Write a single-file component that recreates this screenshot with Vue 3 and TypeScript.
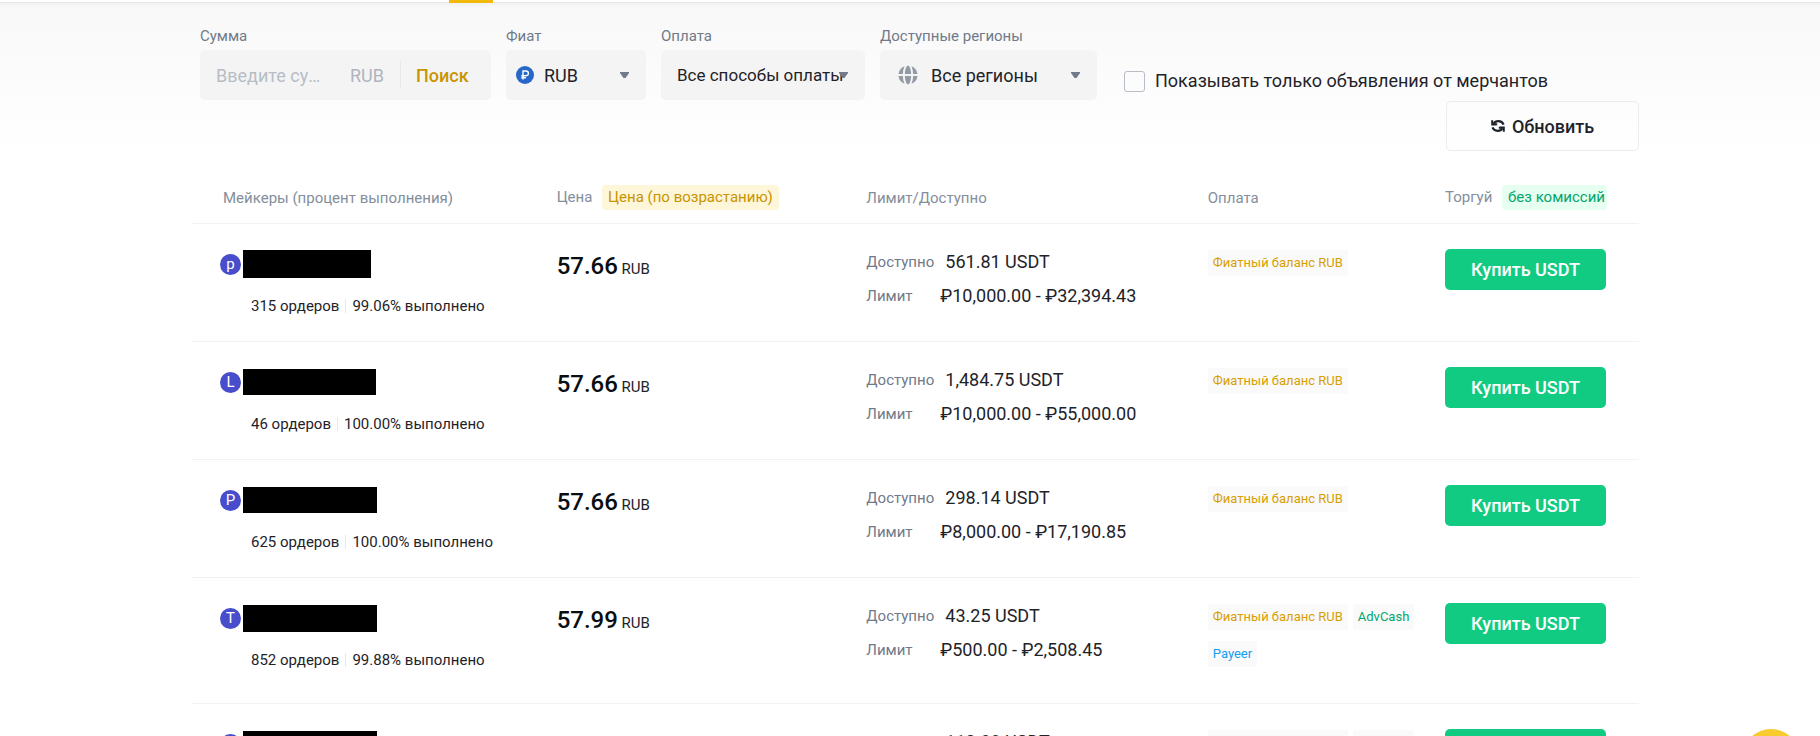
<script setup lang="ts">
import { ref } from 'vue'

interface Method {
  name: string
  tone: 'gold' | 'green' | 'blue'
}

interface Offer {
  initial: string
  maskWidth: number
  maskHeight: number
  orders: string
  completion: string
  price: string
  available: string
  limit: string
  methods: Method[]
}

const fiatBalance: Method = { name: 'Фиатный баланс RUB', tone: 'gold' }
const advCash: Method = { name: 'AdvCash', tone: 'green' }
const payeer: Method = { name: 'Payeer', tone: 'blue' }

const offers: Offer[] = [
  { initial: 'p', maskWidth: 128, maskHeight: 28, orders: '315', completion: '99.06%', price: '57.66', available: '561.81', limit: '₽10,000.00 - ₽32,394.43', methods: [fiatBalance] },
  { initial: 'L', maskWidth: 133, maskHeight: 26, orders: '46', completion: '100.00%', price: '57.66', available: '1,484.75', limit: '₽10,000.00 - ₽55,000.00', methods: [fiatBalance] },
  { initial: 'P', maskWidth: 134, maskHeight: 26, orders: '625', completion: '100.00%', price: '57.66', available: '298.14', limit: '₽8,000.00 - ₽17,190.85', methods: [fiatBalance] },
  { initial: 'T', maskWidth: 134, maskHeight: 27, orders: '852', completion: '99.88%', price: '57.99', available: '43.25', limit: '₽500.00 - ₽2,508.45', methods: [fiatBalance, advCash, payeer] },
  { initial: 'C', maskWidth: 134, maskHeight: 27, orders: '120', completion: '99.00%', price: '58.00', available: '110.88', limit: '₽1,000.00 - ₽6,000.00', methods: [fiatBalance, advCash] },
]

const amount = ref('')
const merchantsOnly = ref(false)
</script>

<template>
  <div class="page">
    <div class="tabs"><span class="tab-active"></span></div>

    <main class="content">
      <form class="filters" @submit.prevent>
        <div class="field field-amount">
          <label for="amount">Сумма</label>
          <div class="box">
            <input id="amount" v-model="amount" type="text" placeholder="Введите сумму" />
            <span class="unit">RUB</span>
            <button class="search" type="submit">Поиск</button>
          </div>
        </div>

        <div class="field field-fiat">
          <label for="fiat">Фиат</label>
          <div class="box">
            <svg class="lead coin" viewBox="0 0 18 18" aria-hidden="true">
              <circle cx="9" cy="9" r="9" fill="#2767c9" />
              <path d="M7 13.5V5h3a2.4 2.4 0 0 1 0 4.8H5.3M5.3 11.7h4.6" fill="none" stroke="#fff" stroke-width="1.4" />
            </svg>
            <select id="fiat"><option>RUB</option></select>
            <svg class="caret" viewBox="0 0 9 6" aria-hidden="true"><path d="M0 0h9v1L5.5 6h-2L0 1z" /></svg>
          </div>
        </div>

        <div class="field field-payment">
          <label for="payment">Оплата</label>
          <div class="box">
            <select id="payment"><option>Все способы оплаты</option></select>
            <svg class="caret" viewBox="0 0 9 6" aria-hidden="true"><path d="M0 0h9v1L5.5 6h-2L0 1z" /></svg>
          </div>
        </div>

        <div class="field field-region">
          <label for="region">Доступные регионы</label>
          <div class="box">
            <svg class="lead globe" viewBox="0 0 20 20" aria-hidden="true">
              <g fill="#929aa5">
                <path d="M6.6 1.2A9.6 9.6 0 0 0 .5 9h4.4c.1-3 .7-5.7 1.7-7.8zM13.4 1.2A9.6 9.6 0 0 1 19.5 9h-4.4c-.1-3-.7-5.7-1.7-7.8zM6.6 18.8A9.6 9.6 0 0 1 .5 11h4.4c.1 3 .7 5.7 1.7 7.8zM13.4 18.8A9.6 9.6 0 0 0 19.5 11h-4.4c-.1 3-.7 5.7-1.7 7.8z" />
                <path d="M6.9 9c.1-4.8 1.6-8.5 3.1-8.5S13 4.2 13.1 9zM6.9 11c.1 4.8 1.6 8.5 3.1 8.5s3-3.7 3.1-8.5z" />
              </g>
            </svg>
            <select id="region"><option>Все регионы</option></select>
            <svg class="caret" viewBox="0 0 9 6" aria-hidden="true"><path d="M0 0h9v1L5.5 6h-2L0 1z" /></svg>
          </div>
        </div>

        <label class="check">
          <input v-model="merchantsOnly" type="checkbox" />
          <span>Показывать только объявления от мерчантов</span>
        </label>
      </form>

      <div class="actions">
        <button class="refresh" type="button">
          <svg viewBox="0 0 14 14" aria-hidden="true">
            <g fill="none" stroke="#1e2329" stroke-width="2.2">
              <path d="M2.5 5.3h3.7M1.2 1.2v4.2h4" stroke-width="2" />
              <path d="M2.6 4.8C4.5 1.3 10.5 1 12.6 5.6" />
              <path d="M11.5 8.7H7.8M12.8 12.8V8.6h-4" stroke-width="2" />
              <path d="M11.4 9.2C9.5 12.7 3.5 13 1.4 8.4" />
            </g>
          </svg>
          Обновить
        </button>
      </div>

      <table class="offers">
        <thead>
          <tr>
            <th class="maker" scope="col">Мейкеры (процент выполнения)</th>
            <th class="price" scope="col">Цена <span class="chip chip-gold">Цена (по возрастанию)</span></th>
            <th class="limits" scope="col">Лимит/Доступно</th>
            <th class="payment" scope="col">Оплата</th>
            <th class="trade" scope="col">Торгуй <span class="chip chip-green">без комиссий</span></th>
          </tr>
        </thead>
        <tbody>
          <tr v-for="(offer, i) in offers" :key="i">
            <td class="maker">
              <div class="name">
                <span class="avatar">{{ offer.initial }}</span>
                <span class="mask" :style="{ width: offer.maskWidth + 'px', height: offer.maskHeight + 'px' }"></span>
              </div>
              <div class="stats">
                <span>{{ offer.orders }} ордеров</span>
                <span class="rule"></span>
                <span>{{ offer.completion }} выполнено</span>
              </div>
            </td>
            <td class="price"><strong>{{ offer.price }}</strong> RUB</td>
            <td class="limits">
              <dl>
                <div class="available"><dt>Доступно</dt><dd>{{ offer.available }} USDT</dd></div>
                <div><dt>Лимит</dt><dd>{{ offer.limit }}</dd></div>
              </dl>
            </td>
            <td class="payment">
              <ul>
                <li v-for="m in offer.methods" :key="m.name" :class="m.tone">{{ m.name }}</li>
              </ul>
            </td>
            <td class="trade"><button class="buy" type="button">Купить USDT</button></td>
          </tr>
        </tbody>
      </table>
    </main>

    <button class="chat" type="button" aria-label="Чат"></button>
  </div>
</template>

<style>
body {
  background: #fff;
}
</style>

<style scoped>
.page {
  min-height: 100vh;
  background: linear-gradient(#f8f8f8, #fff 156px);
  color: #1e2329;
  font-family: Roboto, 'Noto Sans', sans-serif;
  font-size: 18px;
}
button,
input,
select {
  font: inherit;
  color: inherit;
}
button {
  cursor: pointer;
}
.tabs {
  height: 2px;
  padding-left: 449px;
  background: #fff;
  border-bottom: 1px solid #e8e8e8;
  box-shadow: 0 1px 4px rgba(0, 0, 0, 0.06);
}
.tab-active {
  display: block;
  width: 44px;
  height: 3px;
  background: #f0b90b;
}
.content {
  padding: 23px 181px 0 192px;
}
.filters {
  display: flex;
  padding-left: 8px;
}
.field {
  flex: none;
  margin-right: 15px;
}
.field label {
  display: block;
  margin-bottom: 4px;
  color: #707a8a;
  font-size: 15px;
  line-height: 20px;
}
.box {
  position: relative;
  display: flex;
  align-items: center;
  box-sizing: border-box;
  height: 50px;
  border-radius: 5px;
  background: #f4f4f4;
}
.field-amount .box {
  width: 291px;
  padding-left: 16px;
}
.field-fiat .box {
  width: 140px;
}
.field-payment .box {
  width: 204px;
}
.field-region .box {
  width: 217px;
}
#amount {
  width: 112px;
  padding: 0;
  border: 0;
  outline: 0;
  background: none;
  text-overflow: ellipsis;
}
#amount::placeholder {
  color: #b7bdc6;
  opacity: 1;
}
.unit {
  margin-left: 22px;
  color: #aeb4be;
}
.search {
  height: 28px;
  margin-left: 16px;
  padding: 0 15px;
  border: 0;
  border-left: 1px solid #e6e8ea;
  background: none;
  color: #c99400;
  font-weight: 500;
}
select {
  width: 100%;
  height: 100%;
  padding: 0 0 0 16px;
  border: 0;
  outline: 0;
  appearance: none;
  background: none;
}
.field-fiat select {
  padding-left: 38px;
}
.field-payment select {
  font-size: 17px;
}
.field-region select {
  padding-left: 51px;
}
.lead {
  position: absolute;
  pointer-events: none;
}
.coin {
  left: 10px;
  width: 18px;
  height: 18px;
}
.globe {
  left: 18px;
  width: 20px;
  height: 20px;
}
.caret {
  position: absolute;
  right: 17px;
  width: 9px;
  height: 6px;
  fill: #707a8a;
  pointer-events: none;
}
.check {
  display: flex;
  align-items: center;
  align-self: flex-end;
  gap: 10px;
  margin: 0 0 8px 12px;
  line-height: 22px;
  white-space: nowrap;
}
.check input {
  appearance: none;
  box-sizing: border-box;
  width: 21px;
  height: 21px;
  margin: 0;
  border: 1px solid #b7bdc6;
  border-radius: 3px;
}
.check input:checked {
  background: #f0b90b;
}
.actions {
  display: flex;
  justify-content: flex-end;
  margin-top: 1px;
}
.refresh {
  display: flex;
  align-items: center;
  justify-content: center;
  gap: 7px;
  box-sizing: border-box;
  width: 193px;
  height: 50px;
  border: 1px solid #eaecef;
  border-radius: 5px;
  background: none;
  font-weight: 500;
}
.refresh svg {
  width: 14px;
  height: 14px;
}
.offers {
  width: 100%;
  margin-top: 21px;
  border-collapse: separate;
  border-spacing: 0;
  table-layout: fixed;
}
th,
td {
  box-sizing: border-box;
  padding: 0;
  border-bottom: 1px solid #f1f2f4;
  text-align: left;
  vertical-align: top;
}
th {
  height: 52px;
  color: #848e9c;
  font-size: 15px;
  font-weight: 400;
  vertical-align: middle;
  white-space: nowrap;
}
td {
  height: 118px;
  padding-top: 25px;
}
th.maker {
  width: 25.2%;
  padding-left: 31px;
}
th.price {
  width: 21.4%;
}
th.limits {
  width: 23.6%;
}
th.payment {
  width: 16.4%;
}
td.maker {
  padding-left: 28px;
}
.chip {
  display: inline-block;
  margin-left: 6px;
  padding: 0 6px;
  border-radius: 4px;
  line-height: 25px;
}
.chip-gold {
  background: #fef6d8;
  color: #c99400;
}
.chip-green {
  padding-right: 2px;
  background: #e6fff1;
  color: #03a66d;
}
.name {
  display: flex;
  align-items: center;
  gap: 2px;
  height: 30px;
}
.avatar {
  width: 21px;
  height: 21px;
  border-radius: 50%;
  background: #474dcb;
  color: #fff;
  font-size: 15px;
  line-height: 21px;
  text-align: center;
}
.mask {
  background: #000;
}
.stats {
  display: flex;
  align-items: center;
  gap: 6px;
  margin: 17px 0 0 31px;
  font-size: 15px;
  line-height: 20px;
  white-space: nowrap;
}
.rule {
  width: 1px;
  height: 14px;
  background: #e6e8ea;
}
td.price {
  padding-top: 28px;
  font-size: 15px;
  line-height: 28px;
}
.price strong {
  color: #0b0e11;
  font-size: 24px;
  font-weight: 500;
}
td.limits {
  padding-top: 21px;
}
dl {
  margin: 0;
}
dl div {
  display: flex;
  line-height: 34px;
  white-space: nowrap;
}
dt {
  width: 74px;
  color: #707a8a;
  font-size: 15px;
}
.available dt {
  width: 79px;
}
dd {
  margin: 0;
}
td.payment {
  padding: 26px 0 20px;
}
ul {
  display: flex;
  flex-wrap: wrap;
  column-gap: 5px;
  margin: 0;
  padding: 0;
  list-style: none;
}
li {
  margin-bottom: 11px;
  padding: 0 5px;
  border-radius: 2px;
  background: #fafafa;
  font-size: 13px;
  line-height: 26px;
}
.gold {
  color: #d89f00;
}
.green {
  color: #03a66d;
}
.blue {
  color: #149df2;
}
td.payment {
  padding-bottom: 25px;
}
.buy {
  width: 161px;
  height: 41px;
  padding: 0;
  border: 0;
  border-radius: 5px;
  background: #12cb82;
  color: #fff;
  font-weight: 500;
}
.chat {
  position: fixed;
  right: 20px;
  bottom: -51px;
  width: 58px;
  height: 58px;
  border: 0;
  border-radius: 50%;
  background: #f8cc2f;
}
</style>
